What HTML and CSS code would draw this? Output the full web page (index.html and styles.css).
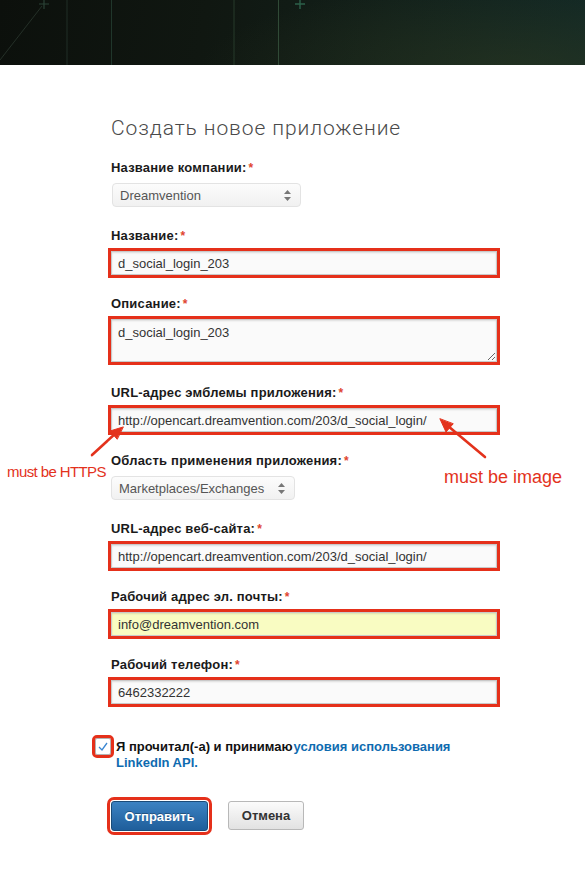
FILE: index.html
```html
<!DOCTYPE html>
<html lang="ru">
<head>
<meta charset="utf-8">
<title>Создать новое приложение</title>
<link rel="stylesheet" href="styles.css">
</head>
<body>
<header class="top">
  <svg class="deco" width="585" height="65" viewBox="0 0 585 65">
    <line x1="67" y1="0" x2="67" y2="65" stroke="#212e26" stroke-width="1"/>
    <line x1="111.5" y1="0" x2="111.5" y2="65" stroke="#20362b" stroke-width="1"/>
    <line x1="234" y1="0" x2="234" y2="65" stroke="#263a2a" stroke-width="1"/>
    <line x1="278.5" y1="0" x2="278.5" y2="65" stroke="#304a36" stroke-width="1"/>
    <line x1="0" y1="60" x2="42" y2="6" stroke="#243028" stroke-width="1"/>
    <path d="M44 0v9M39 4h10" stroke="#2b4236" stroke-width="1.2"/>
    <path d="M300 0v9M295 4h10" stroke="#2c604a" stroke-width="1.4"/>
  </svg>
</header>

<main class="form">
  <h1 class="title">Создать новое приложение</h1>

  <div class="field">
    <label class="lbl">Название компании:<span class="req">*</span></label>
    <div class="select sel-company"><span>Dreamvention</span>
      <svg class="updown" width="7" height="11" viewBox="0 0 7 11"><path d="M3.5 0L7 4H0z M3.5 11L0 7h7z" fill="#777"/></svg>
    </div>
  </div>

  <div class="field">
    <label class="lbl">Название:<span class="req">*</span></label>
    <input class="input flag" type="text" value="d_social_login_203">
  </div>

  <div class="field field-area">
    <label class="lbl">Описание:<span class="req">*</span></label>
    <textarea class="area flag">d_social_login_203</textarea>
  </div>

  <div class="field">
    <label class="lbl">URL-адрес эмблемы приложения:<span class="req">*</span></label>
    <input class="input flag" type="text" value="http://opencart.dreamvention.com/203/d_social_login/">
  </div>

  <div class="field">
    <label class="lbl">Область применения приложения:<span class="req">*</span></label>
    <div class="select sel-area"><span>Marketplaces/Exchanges</span>
      <svg class="updown" width="7" height="11" viewBox="0 0 7 11"><path d="M3.5 0L7 4H0z M3.5 11L0 7h7z" fill="#777"/></svg>
    </div>
  </div>

  <div class="field">
    <label class="lbl">URL-адрес веб-сайта:<span class="req">*</span></label>
    <input class="input flag" type="text" value="http://opencart.dreamvention.com/203/d_social_login/">
  </div>

  <div class="field">
    <label class="lbl">Рабочий адрес эл. почты:<span class="req">*</span></label>
    <input class="input flag input-yellow" type="text" value="info@dreamvention.com">
  </div>

  <div class="field">
    <label class="lbl">Рабочий телефон:<span class="req">*</span></label>
    <input class="input flag" type="text" value="6462332222">
  </div>

  <div class="agree">
    <span class="check flag">
      <svg width="10" height="9" viewBox="0 0 10 9"><path d="M1 5l3 3 5-7" fill="none" stroke="#3a86d2" stroke-width="1.3"/></svg>
    </span>
    <p class="agree-text"><span>Я прочитал(-а) и принимаю</span><a class="link" href="#">условия использования LinkedIn API.</a></p>
  </div>

  <div class="actions">
    <button class="btn btn-primary flag-btn" type="button">Отправить</button>
    <button class="btn btn-default" type="button">Отмена</button>
  </div>
</main>

<svg class="arrows" width="585" height="882" viewBox="0 0 585 882">
  <g stroke="#e3321c" stroke-width="2.6" fill="#e3321c" stroke-linecap="round">
    <line x1="92" y1="455" x2="116" y2="433"/>
    <path d="M123 427 L110 431 L117 439 Z" stroke-width="1"/>
    <line x1="485" y1="457" x2="448" y2="426"/>
    <path d="M440 419 L446 432 L453 424 Z" stroke-width="1"/>
  </g>
</svg>
<div class="note note-https">must be HTTPS</div>
<div class="note note-image">must be image</div>
</body>
</html>
```

FILE: styles.css
```css
html, body {
  margin: 0;
  padding: 0;
}
body {
  position: relative;
  width: 585px;
  height: 882px;
  overflow: hidden;
  background: #ffffff;
  font-family: "Liberation Sans", Arial, sans-serif;
  color: #1a1a1a;
}

.top {
  height: 65px;
  background:
    radial-gradient(ellipse 320px 90px at 520px 70px, rgba(50, 60, 32, 0.5), rgba(50, 60, 32, 0) 100%),
    linear-gradient(100deg, #0c100c 0%, #101711 35%, #12201a 65%, #112826 100%);
}
.deco {
  display: block;
}

.form {
  padding: 50px 0 0 111px;
  width: 386px;
}

.title {
  margin: 0 0 19px;
  font-family: Roboto, "Liberation Sans", sans-serif;
  font-weight: 300;
  font-size: 21px;
  line-height: 26px;
  color: #4a4a4a;
  letter-spacing: 0.9px;
}

.field {
  margin-bottom: 21px;
}
.field-area {
  margin-bottom: 23px;
}

.lbl {
  display: block;
  margin-bottom: 7px;
  font-weight: bold;
  font-size: 13px;
  line-height: 16px;
  letter-spacing: 0.2px;
  color: #1a1a1a;
}
.req {
  margin-left: 2px;
  color: #e0452f;
  font-size: 12px;
}

.input {
  display: block;
  box-sizing: border-box;
  width: 386px;
  height: 24px;
  margin: 0;
  padding: 0 6px;
  border: 1px solid #c9c9c9;
  border-radius: 0;
  background: #fafafa;
  box-shadow: inset 0 1px 2px rgba(0, 0, 0, 0.12);
  font-family: "Liberation Sans", Arial, sans-serif;
  font-size: 13px;
  color: #333;
}
.input-yellow {
  background: #f9fcc2;
}

.area {
  display: block;
  box-sizing: border-box;
  width: 386px;
  height: 43px;
  margin: 0;
  padding: 5px 6px;
  border: 1px solid #c9c9c9;
  background: #fafafa;
  box-shadow: inset 0 1px 2px rgba(0, 0, 0, 0.12);
  font-family: "Liberation Sans", Arial, sans-serif;
  font-size: 13px;
  line-height: 16px;
  color: #333;
}

.flag {
  outline: 3px solid #e5301a;
  outline-offset: 0;
}

.select {
  box-sizing: border-box;
  height: 24px;
  display: flex;
  align-items: center;
  justify-content: space-between;
  padding: 0 9px 0 7px;
  border: 1px solid #e3e3e3;
  border-radius: 4px;
  background: linear-gradient(#fcfcfc, #f1f1f1);
  font-size: 13px;
  color: #555;
}
.sel-company {
  width: 189px;
  margin-left: 1px;
}
.sel-area {
  width: 184px;
}
.updown {
  display: block;
}

.agree {
  display: flex;
  align-items: flex-start;
  margin: 35px 0 0 -16px;
}
.check {
  box-sizing: border-box;
  flex: none;
  width: 16px;
  height: 17px;
  margin-top: -1px;
  border: 1px solid #b3b3b3;
  border-radius: 2px;
  background: #fff;
  display: flex;
  align-items: center;
  justify-content: center;
}
.agree-text {
  margin: 0 0 0 5px;
  width: 346px;
  font-weight: bold;
  font-size: 13px;
  line-height: 16px;
  color: #111;
}
.link {
  margin-left: 1px;
  color: #0e6bb0;
  text-decoration: none;
}

.actions {
  display: flex;
  align-items: flex-start;
  gap: 20px;
  margin-top: 30px;
}
.btn {
  box-sizing: border-box;
  height: 30px;
  margin: 0;
  border-radius: 3px;
  font-family: "Liberation Sans", Arial, sans-serif;
  font-weight: bold;
  font-size: 13px;
  cursor: pointer;
}
.btn-primary {
  width: 97px;
  border: 1px solid #1a4b78;
  background: linear-gradient(#3b82c2, #1f5e9b);
  color: #fff;
  text-shadow: 0 -1px 0 rgba(0, 0, 0, 0.3);
}
.flag-btn {
  outline: 3px solid #e5301a;
  outline-offset: 1px;
}
.btn-default {
  width: 76px;
  height: 29px;
  border: 1px solid #b8b8b8;
  background: linear-gradient(#fbfbfb, #e2e2e2);
  color: #333;
}

.arrows {
  position: absolute;
  left: 0;
  top: 0;
  pointer-events: none;
}
.note {
  position: absolute;
  color: #e3321c;
  font-family: "Liberation Sans", Arial, sans-serif;
  white-space: nowrap;
}
.note-https {
  left: 7px;
  top: 463px;
  font-size: 15px;
  line-height: 18px;
  letter-spacing: -0.6px;
}
.note-image {
  left: 444px;
  top: 467px;
  font-size: 18px;
  line-height: 21px;
}
```
